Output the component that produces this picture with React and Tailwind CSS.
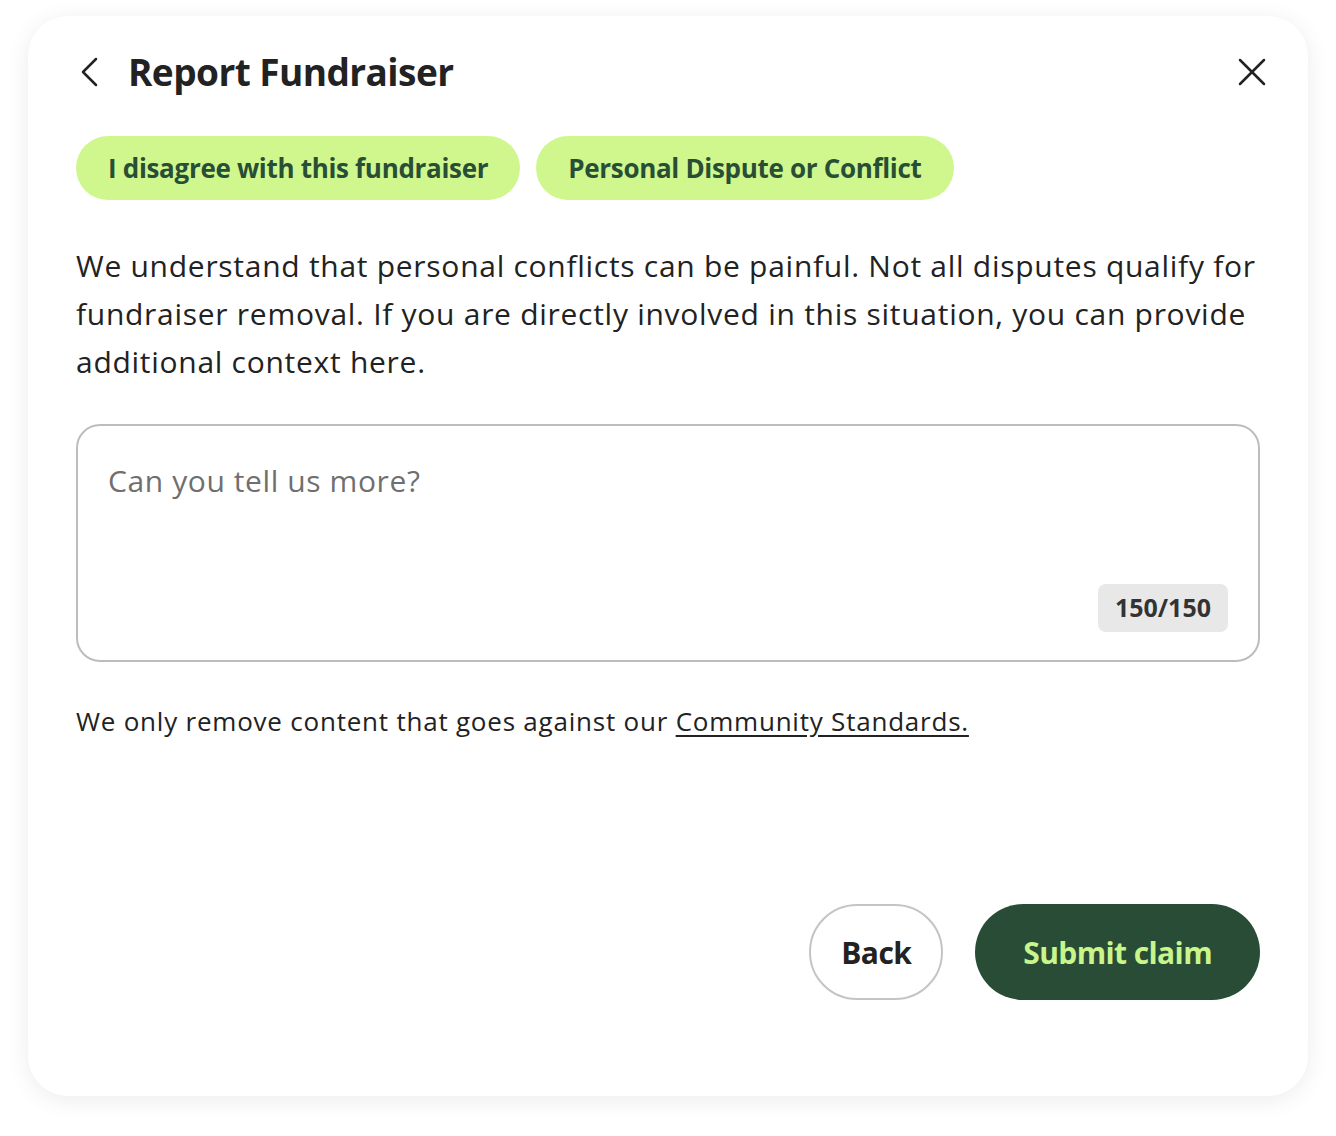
function Chip({ children }) {
  return (
    <span className="inline-flex items-center h-16 px-8 rounded-full bg-[#cff78d] text-[#284e36] text-[26px] font-bold tracking-[-0.012em]">
      {children}
    </span>
  )
}

export default function App() {
  return (
    <div className="min-h-screen bg-white px-7 pt-4 pb-10 font-['Open_Sans',sans-serif] text-[#222]">
      <div className="h-[1080px] rounded-[40px] bg-white shadow-[0_4px_24px_rgba(0,0,0,0.08)] px-12 pt-6 pb-24 flex flex-col">
        {/* Header */}
        <div className="flex items-center justify-between h-16">
          <div className="flex items-center gap-7">
            <button className="ml-1 flex items-center justify-center">
              <svg width="20" height="30" viewBox="0 0 20 30" fill="none" stroke="#222" strokeWidth="2.5" strokeLinecap="round" strokeLinejoin="round">
                <polyline points="16,2 3,15 16,28" />
              </svg>
            </button>
            <h1 className="text-[37px] font-bold tracking-[-0.015em] text-[#222]">Report Fundraiser</h1>
          </div>
          <button className="flex items-center justify-center -mr-[6px]">
            <svg width="28" height="28" viewBox="0 0 28 28" fill="none" stroke="#222" strokeWidth="2.5" strokeLinecap="round">
              <line x1="2" y1="2" x2="26" y2="26" />
              <line x1="26" y1="2" x2="2" y2="26" />
            </svg>
          </button>
        </div>

        {/* Chips */}
        <div className="flex gap-4 mt-8">
          <Chip>I disagree with this fundraiser</Chip>
          <Chip>Personal Dispute or Conflict</Chip>
        </div>

        <p className="mt-[42px] text-[30px] leading-[48px] tracking-[0.024em] text-[#222]">
          We understand that personal conflicts can be painful. Not all disputes qualify for fundraiser removal. If you are directly involved in this situation, you can provide additional context here.
        </p>

        {/* Textarea */}
        <div className="mt-[38px] h-[238px] rounded-[24px] border-2 border-[#bdbdbd] pl-[30px] pr-[30px] pt-10 pb-7 flex flex-col justify-between">
          <span className="text-[30px] leading-none tracking-[0.02em] text-[#6f6f6f]">Can you tell us more?</span>
          <div className="flex justify-end">
            <span className="h-12 px-[17px] flex items-center rounded-lg bg-[#e8e8e8] text-[25px] font-bold text-[#333]">150/150</span>
          </div>
        </div>

        <p className="mt-10 text-[26px] tracking-[0.03em] text-[#222]">
          We only remove content that goes against our{' '}
          <a href="#" className="underline underline-offset-4">Community Standards.</a>
        </p>

        <div className="mt-auto flex justify-end gap-8">
          <button className="h-[96px] px-[30px] rounded-full border-2 border-[#c4c4c4] text-[30px] font-bold tracking-[-0.02em] text-[#222]">Back</button>
          <button className="h-[96px] px-12 rounded-full bg-[#284c35] text-[30px] font-bold tracking-[-0.02em] text-[#c9f58b]">Submit claim</button>
        </div>
      </div>
    </div>
  )
}
